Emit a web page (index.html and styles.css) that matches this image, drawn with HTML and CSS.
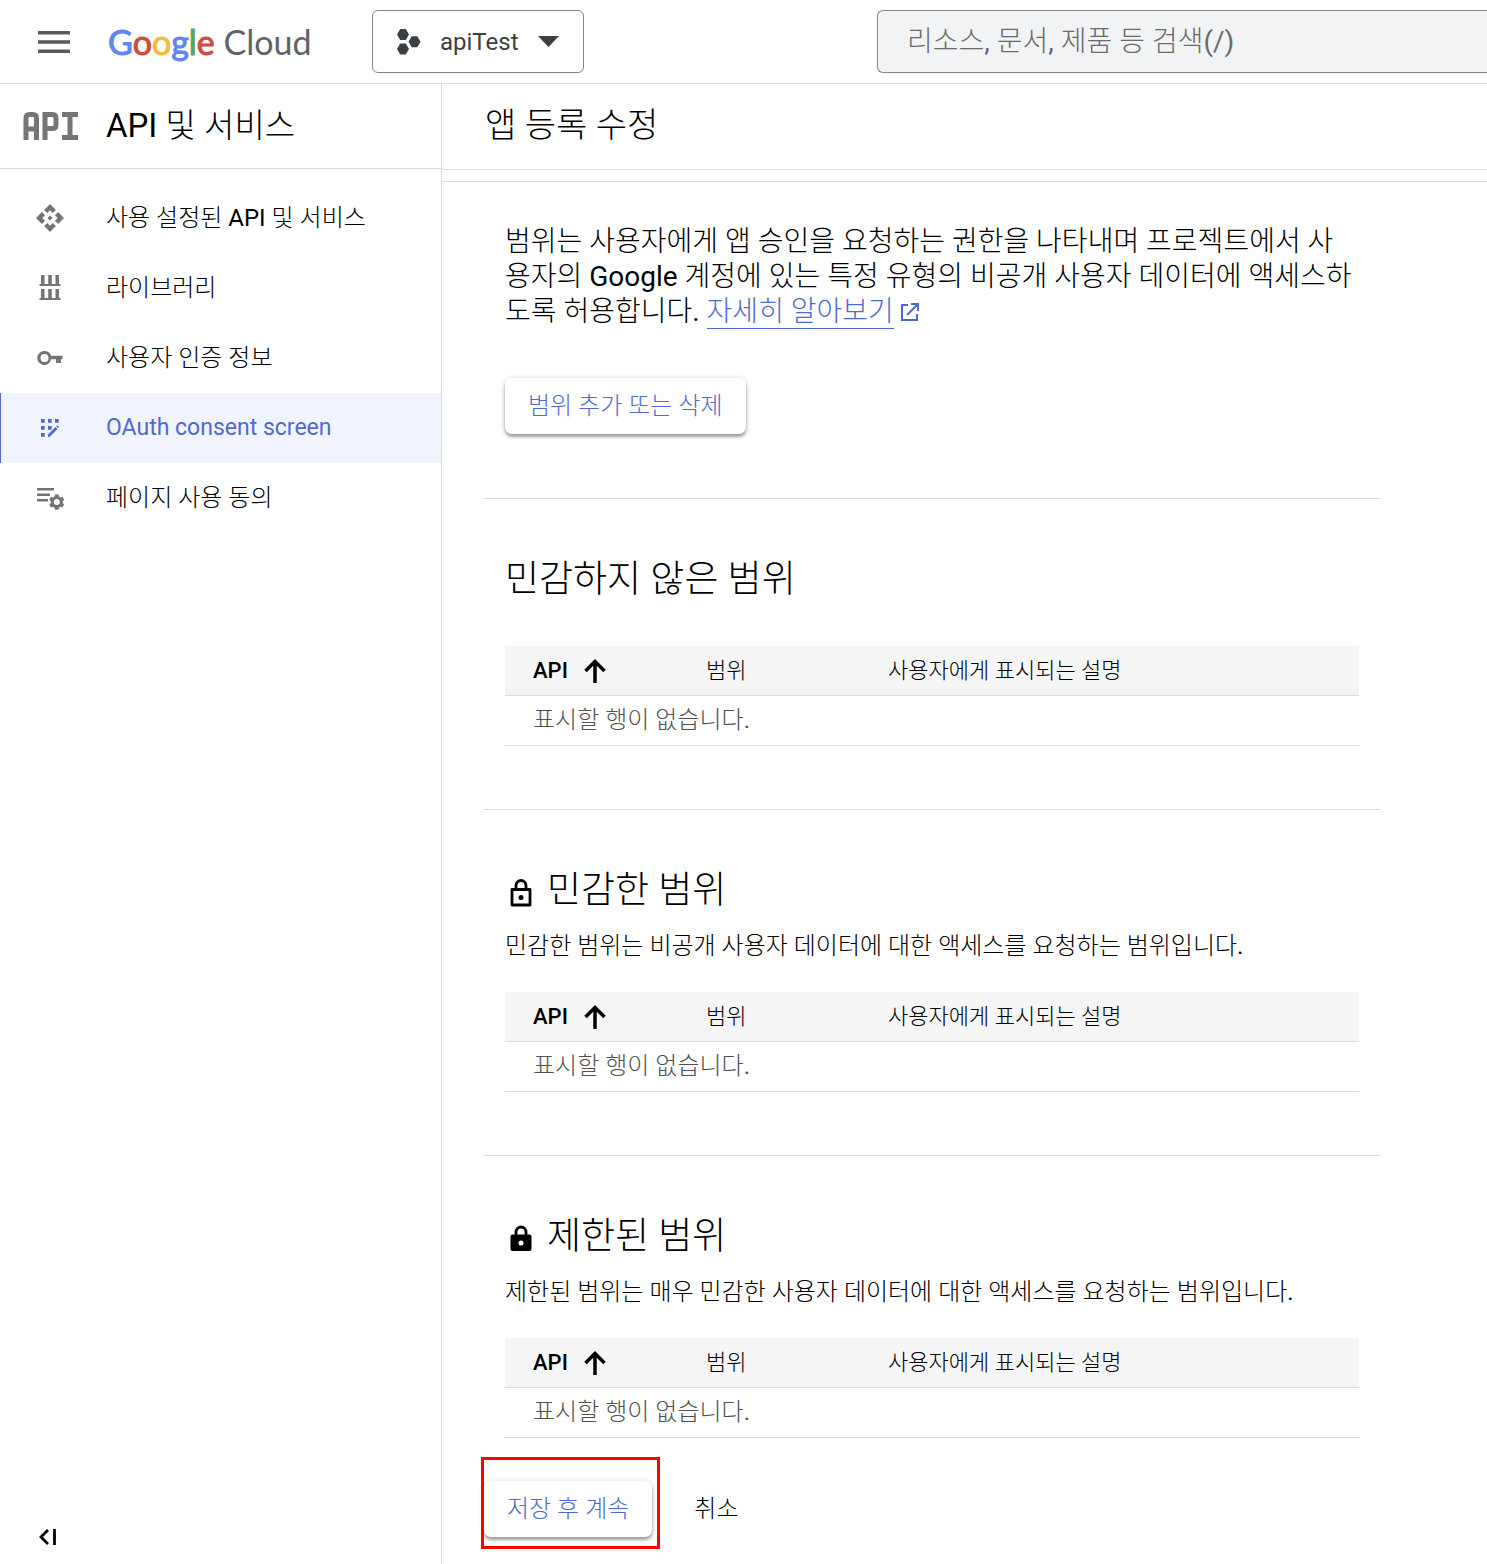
FILE: index.html
```html
<!DOCTYPE html>
<html lang="ko">
<head>
    <meta charset="UTF-8">
    <meta name="viewport" content="width=device-width, initial-scale=1.0">
    <title>앱 등록 수정</title>
    <link rel="stylesheet" href="styles.css">
</head>
<body>
    <header class="topbar">
        <button type="button" class="menu-button" aria-label="메뉴">
            <svg width="32" height="22" viewBox="0 0 32 22" fill="#5a5a5a"><path d="M0 0h32v3.500H0zM0 9.200h32v3.500H0zM0 18.400h32v3.500H0z"/></svg>
        </button>
        <a href="#" class="logo"><span class="g-blue">G</span><span class="g-red">o</span><span class="g-yellow">o</span><span class="g-blue">g</span><span class="g-green">l</span><span class="g-red">e</span> Cloud</a>
        <button type="button" class="project-picker">
            <svg width="24" height="26" viewBox="0 0 24 26" fill="#3c4043"><path d="M3.200 0h5.600L12 5.500 8.800 11H3.200L0 5.500zM3.200 14.500h5.600L12 20l-3.200 5.500H3.200L0 20zM14.700 7.200h5.600l3.200 5.500-3.200 5.500h-5.600l-3.200-5.500z"/></svg>
            <span>apiTest</span>
            <svg width="21" height="11" viewBox="0 0 21 11" fill="#3c4043"><path d="M0 0h21L10.500 11z"/></svg>
        </button>
        <input type="search" class="search" placeholder="리소스, 문서, 제품 등 검색(/)" aria-label="검색">
    </header>
    <div class="layout">
        <aside class="sidebar">
            <div class="sidebar-title">
                <svg width="56" height="28" viewBox="0 0 56 28" fill="none" stroke="#757575" stroke-width="5"><path d="M3 28V6q0-3.500 3.500-3.500h3.500q3.500 0 3.500 3.500v22M3 17h10.500M22 28V2.500h7.500q3.500 0 3.500 3.500v7q0 3.500-3.500 3.500H22M39 2.500h16M39 25.500h16M47 2v24"/></svg>
                <h2>API 및 서비스</h2>
            </div>
            <nav class="nav">
                <a href="#">
                    <svg width="28" height="28" viewBox="1 1 22 22"><path d="M14 12l-2 2-2-2 2-2 2 2zm-2-6l2.120 2.120 2.500-2.500L12 1 7.380 5.620l2.500 2.500L12 6zm-6 6l2.120-2.120-2.500-2.500L1 12l4.620 4.620 2.500-2.500L6 12zm12 0l-2.120 2.120 2.500 2.500L23 12l-4.620-4.620-2.500 2.500L18 12zm-6 6l-2.120-2.120-2.500 2.500L12 23l4.620-4.620-2.500-2.500L12 18z"/></svg>
                    사용 설정된 API 및 서비스
                </a>
                <a href="#">
                    <svg width="28" height="28" viewBox="0 0 28 28"><path d="M5 1h3.500v9h3.700V1h3.600v9h3.700V1H23v9h1.500v2h-21v-2H5zM5 15h3.500v9h3.700v-9h3.600v9h3.700v-9H23v9h1.500v2h-21v-2H5z"/></svg>
                    라이브러리
                </a>
                <a href="#">
                    <svg width="28" height="28" viewBox="0 0 28 28"><path fill-rule="evenodd" d="M8.500 7a7 7 0 0 1 6.600 4.700H26.500v3.600H25V19h-5v-3.700h-4.900A7 7 0 1 1 8.500 7zm0 3a4 4 0 1 0 0 8 4 4 0 0 0 0-8z"/></svg>
                    사용자 인증 정보
                </a>
                <a href="#" class="active" lang="en">
                    <svg width="28" height="28" viewBox="0 0 28 28"><path d="M5 5h3.700v3.700H5zM12 5h3.700v3.700H12zM19 5h3.700v3.700H19zM5 12h3.700v3.700H5zM12 12h3.700v3.700H12zM5 19h3.700v3.700H5zM12 23v-2.500l7.500-7.500 2 2-8 8zM20.200 12.300l1-1 2 2-1 1z"/></svg>
                    OAuth consent screen
                </a>
                <a href="#">
                    <svg width="28" height="28" viewBox="0 1 28 28"><path fill-rule="evenodd" d="M1 5h17v2.500H1zM1 10.500h13V13H1zM1 16h11v2.500H1zM19 11.500h3.500l.5 2 1.500.9 2-.6 1.700 3-1.500 1.400v1.800l1.500 1.400-1.700 3-2-.6-1.500.9-.5 2H19l-.5-2-1.500-.9-2 .6-1.700-3 1.500-1.400v-1.800l-1.500-1.400 1.700-3 2 .6 1.500-.9zm1.800 4.600a3 3 0 1 0 0 6 3 3 0 0 0 0-6z"/></svg>
                    페이지 사용 동의
                </a>
            </nav>
            <button type="button" class="collapse" aria-label="메뉴 접기">
                <svg width="18" height="16" viewBox="0 0 18 16" fill="none" stroke="#000" stroke-width="2.800"><path d="M9 1L2 8l7 7M15.500 0v16"/></svg>
            </button>
        </aside>
        <main class="main">
            <div class="page-title">
                <h1>앱 등록 수정</h1>
            </div>
            <div class="content">
                <section class="scope">
                    <p class="intro">범위는 사용자에게 앱 승인을 요청하는 권한을 나타내며 프로젝트에서 사용자의 Google 계정에 있는 특정 유형의 비공개 사용자 데이터에 액세스하도록 허용합니다. <a href="#">자세히 알아보기</a><svg class="external" width="19" height="19" viewBox="0 0 19 19" fill="none" stroke="#5069cf" stroke-width="2"><path d="M8 2H2v15h15v-6M11 1h7v7M17.500 1.500L7 12"/></svg></p>
                    <button type="button" class="raised">범위 추가 또는 삭제</button>
                </section>
                <section class="scope">
                    <h2>민감하지 않은 범위</h2>
                    <table>
                        <thead>
                            <tr>
                                <th class="sorted">API <svg width="22" height="24" viewBox="0 0 22 24"><path d="M11 24V3M1.500 12L11 2.500l9.500 9.500"/></svg></th>
                                <th>범위</th>
                                <th>사용자에게 표시되는 설명</th>
                            </tr>
                        </thead>
                        <tbody>
                            <tr><td colspan="3">표시할 행이 없습니다.</td></tr>
                        </tbody>
                    </table>
                </section>
                <section class="scope">
                    <h2><svg class="lock" width="24" height="30" viewBox="0 0 24 30"><path d="M3 11.500h18v15.500H3zM7 11V7.500a5 5 0 0 1 10 0V11" fill="none" stroke="#000" stroke-width="2.800" stroke-linejoin="round"/><circle cx="12" cy="19.500" r="2.500"/></svg>민감한 범위</h2>
                    <p class="description">민감한 범위는 비공개 사용자 데이터에 대한 액세스를 요청하는 범위입니다.</p>
                    <table>
                        <thead>
                            <tr>
                                <th class="sorted">API <svg width="22" height="24" viewBox="0 0 22 24"><path d="M11 24V3M1.500 12L11 2.500l9.500 9.500"/></svg></th>
                                <th>범위</th>
                                <th>사용자에게 표시되는 설명</th>
                            </tr>
                        </thead>
                        <tbody>
                            <tr><td colspan="3">표시할 행이 없습니다.</td></tr>
                        </tbody>
                    </table>
                </section>
                <section class="scope">
                    <h2><svg class="lock" width="24" height="30" viewBox="0 0 24 30"><path d="M7 12V8a5 5 0 0 1 10 0v4" fill="none" stroke="#000" stroke-width="2.800"/><path fill-rule="evenodd" d="M3.500 10.500h17a2 2 0 0 1 2 2V25a2 2 0 0 1-2 2h-17a2 2 0 0 1-2-2V12.500a2 2 0 0 1 2-2zM12 16.500a2.500 2.500 0 1 0 0 5 2.500 2.500 0 0 0 0-5z"/></svg>제한된 범위</h2>
                    <p class="description">제한된 범위는 매우 민감한 사용자 데이터에 대한 액세스를 요청하는 범위입니다.</p>
                    <table>
                        <thead>
                            <tr>
                                <th class="sorted">API <svg width="22" height="24" viewBox="0 0 22 24"><path d="M11 24V3M1.500 12L11 2.500l9.500 9.500"/></svg></th>
                                <th>범위</th>
                                <th>사용자에게 표시되는 설명</th>
                            </tr>
                        </thead>
                        <tbody>
                            <tr><td colspan="3">표시할 행이 없습니다.</td></tr>
                        </tbody>
                    </table>
                </section>
                <div class="actions">
                    <div class="highlight">
                        <button type="button" class="raised">저장 후 계속</button>
                    </div>
                    <button type="button" class="flat">취소</button>
                </div>
            </div>
        </main>
    </div>
</body>
</html>
```
FILE: styles.css
```css
* { box-sizing: border-box; }
body { margin: 0; min-height: 100vh; display: flex; flex-direction: column; background: #fff; color: #000; font-family: Roboto, "Noto Sans CJK KR Light", "Noto Sans CJK KR", sans-serif; font-size: 24px; line-height: 32px; }
h1, h2, p { margin: 0; font-weight: 400; }
a { color: #5069cf; text-decoration: none; }
button, input { font: inherit; cursor: pointer; }
svg { flex: none; }

.topbar { display: flex; align-items: center; height: 84px; border-bottom: 1px solid #dadce0; }
.menu-button { display: flex; margin-left: 38px; padding: 0; background: none; border: none; }
.logo { width: 264px; padding-left: 38px; color: #5f6368; font-family: Lato, sans-serif; font-size: 34px; white-space: nowrap; }
.g-blue { color: #5f86f2; }
.g-red { color: #cf4d3f; }
.g-yellow { color: #ecbd42; }
.g-green { color: #58a55c; }
.g-blue, .g-red, .g-yellow, .g-green { -webkit-text-stroke: 1px currentColor; }
.project-picker { display: flex; align-items: center; gap: 19px; width: 212px; height: 63px; margin: 0 293px 0 38px; padding: 0 24px; flex: none; background: #fff; border: 1px solid #80868b; border-radius: 6px; color: #3c4043; }
.search { flex: 1; min-width: 0; height: 63px; padding: 0 29px; background: #f1f3f4; border: 1px solid #80868b; border-right: none; border-radius: 6px 0 0 6px; font-size: 28px; appearance: none; }
.search::placeholder { color: #6b6b6b; }

.layout { display: flex; flex: 1; }
.sidebar { width: 442px; flex: none; display: flex; flex-direction: column; border-right: 1px solid #dadce0; }
.sidebar-title { display: flex; align-items: center; gap: 27px; height: 85px; padding-left: 23px; border-bottom: 1px solid #dadce0; }
.sidebar-title h2 { font-size: 33px; }
.nav { padding-top: 14px; }
.nav a { display: flex; align-items: center; gap: 42px; height: 70px; padding-left: 35px; border-left: 1px solid transparent; color: #000; fill: #757575; }
.nav a.active { background: #f1f4fe; border-left-color: #5069cf; color: #5069cf; fill: #5069cf; font-size: 23px; }
.collapse { display: flex; margin: auto auto 19px 39px; padding: 0; background: none; border: none; }

.main { flex: 1; min-width: 0; }
.page-title { height: 86px; padding: 25px 43px; border-bottom: 1px solid #dadce0; }
.page-title h1 { font-size: 34px; }
.content { margin-top: 11px; padding: 0 107px 26px 42px; border-top: 1px solid #dadce0; }
.scope { padding: 57px 21px 63px; border-bottom: 1px solid #dadce0; }
.scope:first-child { padding-top: 42px; padding-bottom: 64px; }
.scope:nth-last-child(2) { padding-bottom: 43px; border-bottom: none; }
.intro { margin-bottom: 49px; font-size: 28px; line-height: 35px; }
.intro a { border-bottom: 1px solid #5069cf; }
.external { margin-left: 6px; vertical-align: -1px; }
.scope h2 { display: flex; align-items: center; gap: 14px; font-size: 37px; line-height: 48px; }
.lock { margin-left: 4px; margin-top: 3px; }
.description { margin-top: 15px; }

table { width: 100%; margin-top: 30px; border-collapse: separate; border-spacing: 0; table-layout: fixed; }
h2 + table { margin-top: 42px; }
th, td { height: 50px; padding: 0 28px; border-bottom: 1px solid #dadce0; text-align: left; line-height: 24px; }
th { background: #f5f5f5; font-size: 22px; font-weight: 400; white-space: nowrap; }
th:nth-child(1) { width: 173px; }
th:nth-child(2) { width: 182px; }
td { padding-bottom: 2px; color: #505050; }
.sorted { font-weight: 500; }
.sorted svg { margin-left: 11px; vertical-align: -5px; fill: none; stroke: #000; stroke-width: 3.500; }

.raised { height: 56px; padding: 0 23px; background: #fff; border: none; border-radius: 7px; box-shadow: 0 3px 3px rgba(0, 0, 0, 0.3), 0 1px 6px rgba(0, 0, 0, 0.18); color: #5069cf; }
.flat { padding: 0; background: none; border: none; }
.actions { display: flex; align-items: center; gap: 42px; }
.highlight { position: relative; }
.highlight::after { content: ""; position: absolute; inset: -24px -8px -12px -3px; border: 3px solid #f00; pointer-events: none; }
```
